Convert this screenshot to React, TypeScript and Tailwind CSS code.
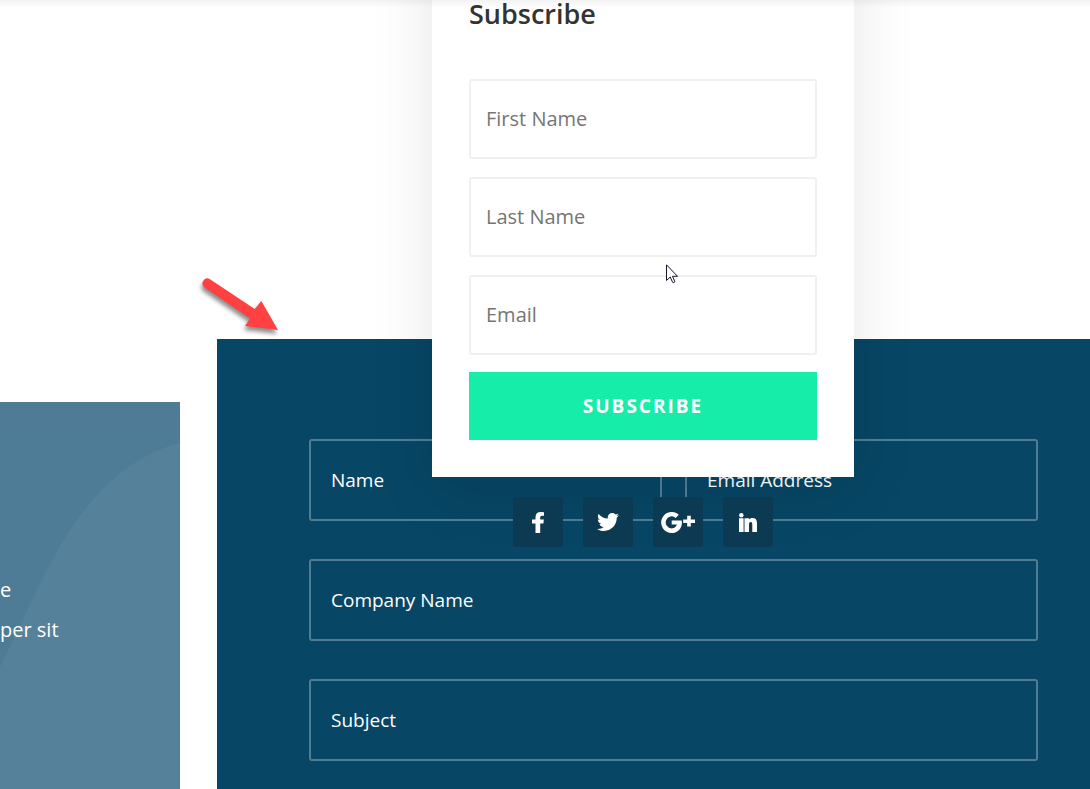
import { useState } from "react";
import { FaTwitter } from "react-icons/fa";

const contactInput =
  "h-[82px] w-full min-w-0 rounded-[3px] border-2 border-white/30 bg-transparent px-5 text-[19px] text-white placeholder:text-white focus:outline-none focus:border-white";

const popupFields = [
  { id: "first-name", label: "First Name", type: "text" },
  { id: "last-name", label: "Last Name", type: "text" },
  { id: "popup-email", label: "Email", type: "email" },
];

function FacebookIcon() {
  return (
    <svg viewBox="0 0 12 21" className="h-[21px] w-3" fill="currentColor">
      <path d="M12 .2V3.8H10.1C8.6 3.8 8.2 4.5 8.2 5.7V7.6H11.8L11.4 11.4H8.2V21H3.5V11.4H0V7.6H3.5V5.2C3.5 1.8 5.4 0 8.8 0Z" />
    </svg>
  );
}

function GooglePlusIcon() {
  return (
    <svg viewBox="0 0 34 21" className="h-[21px] w-[34px]" fill="currentColor">
      <path d="M10.7 8.5H20.7C21.8 15.4 17.6 21 10.7 21A10.5 10.5 0 1 1 17.8 2.8L14.7 5.9A6 6 0 1 0 10.7 16.4C13.5 16.4 15.3 14.9 15.9 12.6H10.7Z" />
      <path d="M26.2 3.8H29.8V7.6H34V11H29.8V14.6H26.2V11H22.2V7.6H26.2Z" />
    </svg>
  );
}

function LinkedinIcon() {
  return (
    <svg viewBox="0 0 18 19" className="h-[19px] w-[18px]" fill="currentColor">
      <circle cx="2.3" cy="2.2" r="2.2" />
      <path d="M0 5.2H4.6V19H0zM5.5 5.2H10V6.5C10.9 5.5 12 5 13.4 5C16.5 5 18 6.9 18 10.1V19H13.3V11.4C13.3 9.9 12.8 9.1 11.7 9.1C10.6 9.1 10 9.9 10 11.4V19H5.5z" />
    </svg>
  );
}

const socialLinks = [
  { name: "Facebook", icon: <FacebookIcon /> },
  { name: "Twitter", icon: <FaTwitter className="size-[22px]" /> },
  { name: "Google Plus", icon: <GooglePlusIcon /> },
  { name: "LinkedIn", icon: <LinkedinIcon /> },
];

function AboutPanel() {
  return (
    <aside className="relative mt-[402px] w-[180px] shrink-0 overflow-hidden bg-[#4e7b95] pt-[168px] text-xl leading-10 text-white">
      <svg viewBox="0 0 180 387" className="absolute top-0 left-0 w-full" fill="#56819a">
        <path d="M180 41C154 47 124 64 98 92C55 139 40 184 0 265V387H180Z" />
      </svg>
      <p className="relative">
        e<br />
        per sit
      </p>
    </aside>
  );
}

function ContactForm() {
  return (
    <section className="mt-[339px] flex-1 bg-[#074665] pt-[100px] pr-[52px] pb-[29px] pl-[92px]">
      <form className="flex flex-col gap-[38px]" onSubmit={(e) => e.preventDefault()}>
        <div className="flex gap-[23px]">
          <input type="text" aria-label="Name" placeholder="Name" className={contactInput} />
          <input type="email" aria-label="Email Address" placeholder="Email Address" className={contactInput} />
        </div>
        <input type="text" aria-label="Company Name" placeholder="Company Name" className={contactInput} />
        <input type="text" aria-label="Subject" placeholder="Subject" className={contactInput} />
      </form>
    </section>
  );
}

function SubscribePopup() {
  const [values, setValues] = useState<Record<string, string>>({});

  return (
    <form
      onSubmit={(e) => e.preventDefault()}
      className="flex w-[422px] flex-col bg-white px-[37px] pt-[54px] pb-[37px] shadow-[0_12px_60px_rgba(0,0,0,0.1)]"
    >
      <h2 className="mb-[45px] text-[27px] leading-10 font-semibold text-[#333]">Subscribe</h2>
      <div className="flex flex-col gap-[18px]">
        {popupFields.map((field) => (
          <input
            key={field.id}
            id={field.id}
            type={field.type}
            aria-label={field.label}
            placeholder={field.label}
            value={values[field.id] || ""}
            onChange={(e) => setValues({ ...values, [field.id]: e.target.value })}
            className="h-20 w-full rounded-[3px] border-2 border-[#f0f0f0] bg-white px-[15px] pb-0.5 text-xl text-[#666] placeholder:text-[#757575] focus:outline-none"
          />
        ))}
      </div>
      <button
        type="submit"
        className="mt-[17px] h-[68px] bg-[#15eda8] text-[19px] font-bold tracking-[2px] text-white uppercase"
      >
        Subscribe
      </button>
    </form>
  );
}

function SocialFollow() {
  return (
    <ul className="mt-5 flex gap-5">
      {socialLinks.map((link) => (
        <li key={link.name}>
          <a
            href="#"
            aria-label={link.name}
            className="flex size-[50px] items-center justify-center rounded-[3px] bg-[#0c3a53] text-white"
          >
            {link.icon}
          </a>
        </li>
      ))}
    </ul>
  );
}

export default function App() {
  return (
    <div className="relative min-h-screen overflow-hidden bg-white font-['Open_Sans','Noto_Sans',sans-serif]">
      <main className="flex min-h-screen gap-[37px]">
        <AboutPanel />
        <ContactForm />
      </main>

      <div className="absolute inset-x-0 -top-[60px] flex flex-col items-center pl-[196px]">
        <SubscribePopup />
        <SocialFollow />
      </div>

      <div className="pointer-events-none absolute inset-x-0 top-0 h-2 bg-linear-to-b from-black/5 to-transparent" />

      <svg
        viewBox="0 0 80 56"
        className="pointer-events-none absolute top-[277px] left-[200px] w-20 overflow-visible drop-shadow-[-1px_4px_2px_rgba(0,0,0,0.45)]"
        fill="#ff4141"
      >
        <path d="M9.6 1.9L54.8 32L61.3 24L78 53L45 49L50 41.5L4.2 10.2A5 5 0 0 1 9.6 1.9Z" />
      </svg>

      <svg
        viewBox="0 0 13 20"
        className="pointer-events-none absolute top-[264px] left-[666px] h-5 w-[13px]"
        fill="#fff"
        stroke="#151525"
      >
        <path d="M.5.8V16.5L4.2 13L6.6 18.3C7.2 19.2 9.2 18.4 8.7 17.3L6.5 12.3H11.5Z" />
      </svg>
    </div>
  );
}
